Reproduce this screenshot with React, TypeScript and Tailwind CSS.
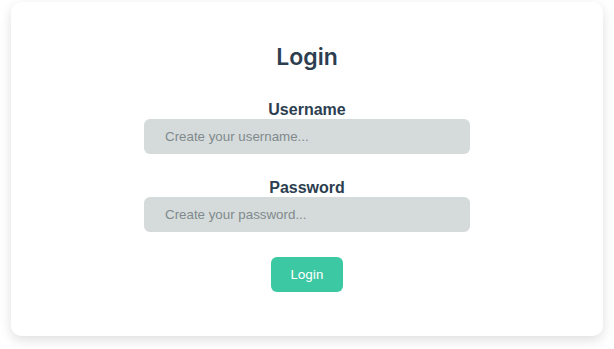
export default function App() {
  return (
    <div className="w-full min-h-screen bg-white px-[11px] pt-[2px] pb-[13px]">
      <div className="h-[334px] w-full rounded-[10px] bg-white shadow-[0_4px_12px_rgba(0,0,0,0.13)] flex flex-col items-center pt-[40px]">
        <h1 className="text-[23px] leading-[30px] font-semibold text-[#2c3e50] font-['Inter',sans-serif]">
          Login
        </h1>

        <form className="mt-[28px] flex flex-col items-center" onSubmit={(e) => e.preventDefault()}>
          <label className="flex flex-col items-center">
            <span className="text-[16px] leading-[19px] font-bold text-[#2c3e50] font-['Liberation_Sans',Arial,sans-serif]">
              Username
            </span>
            <input
              type="text"
              placeholder="Create your username..."
              className="w-[326px] h-[35px] rounded-[6px] bg-[#d5dadb] px-[21px] text-[13.33px] text-[#2c3e50] placeholder:text-[#808a8c] font-['Liberation_Sans',Arial,sans-serif] outline-none"
            />
          </label>

          <label className="mt-[24px] flex flex-col items-center">
            <span className="text-[16px] leading-[19px] font-bold text-[#2c3e50] font-['Liberation_Sans',Arial,sans-serif]">
              Password
            </span>
            <input
              type="password"
              placeholder="Create your password..."
              className="w-[326px] h-[35px] rounded-[6px] bg-[#d5dadb] px-[21px] text-[13.33px] text-[#2c3e50] placeholder:text-[#808a8c] font-['Liberation_Sans',Arial,sans-serif] outline-none"
            />
          </label>

          <button
            type="submit"
            className="mt-[25px] w-[72px] h-[35px] rounded-[6px] bg-[#3cc8a3] text-white text-[13.33px] font-normal font-['Roboto',sans-serif]"
          >
            Login
          </button>
        </form>
      </div>
    </div>
  );
}
